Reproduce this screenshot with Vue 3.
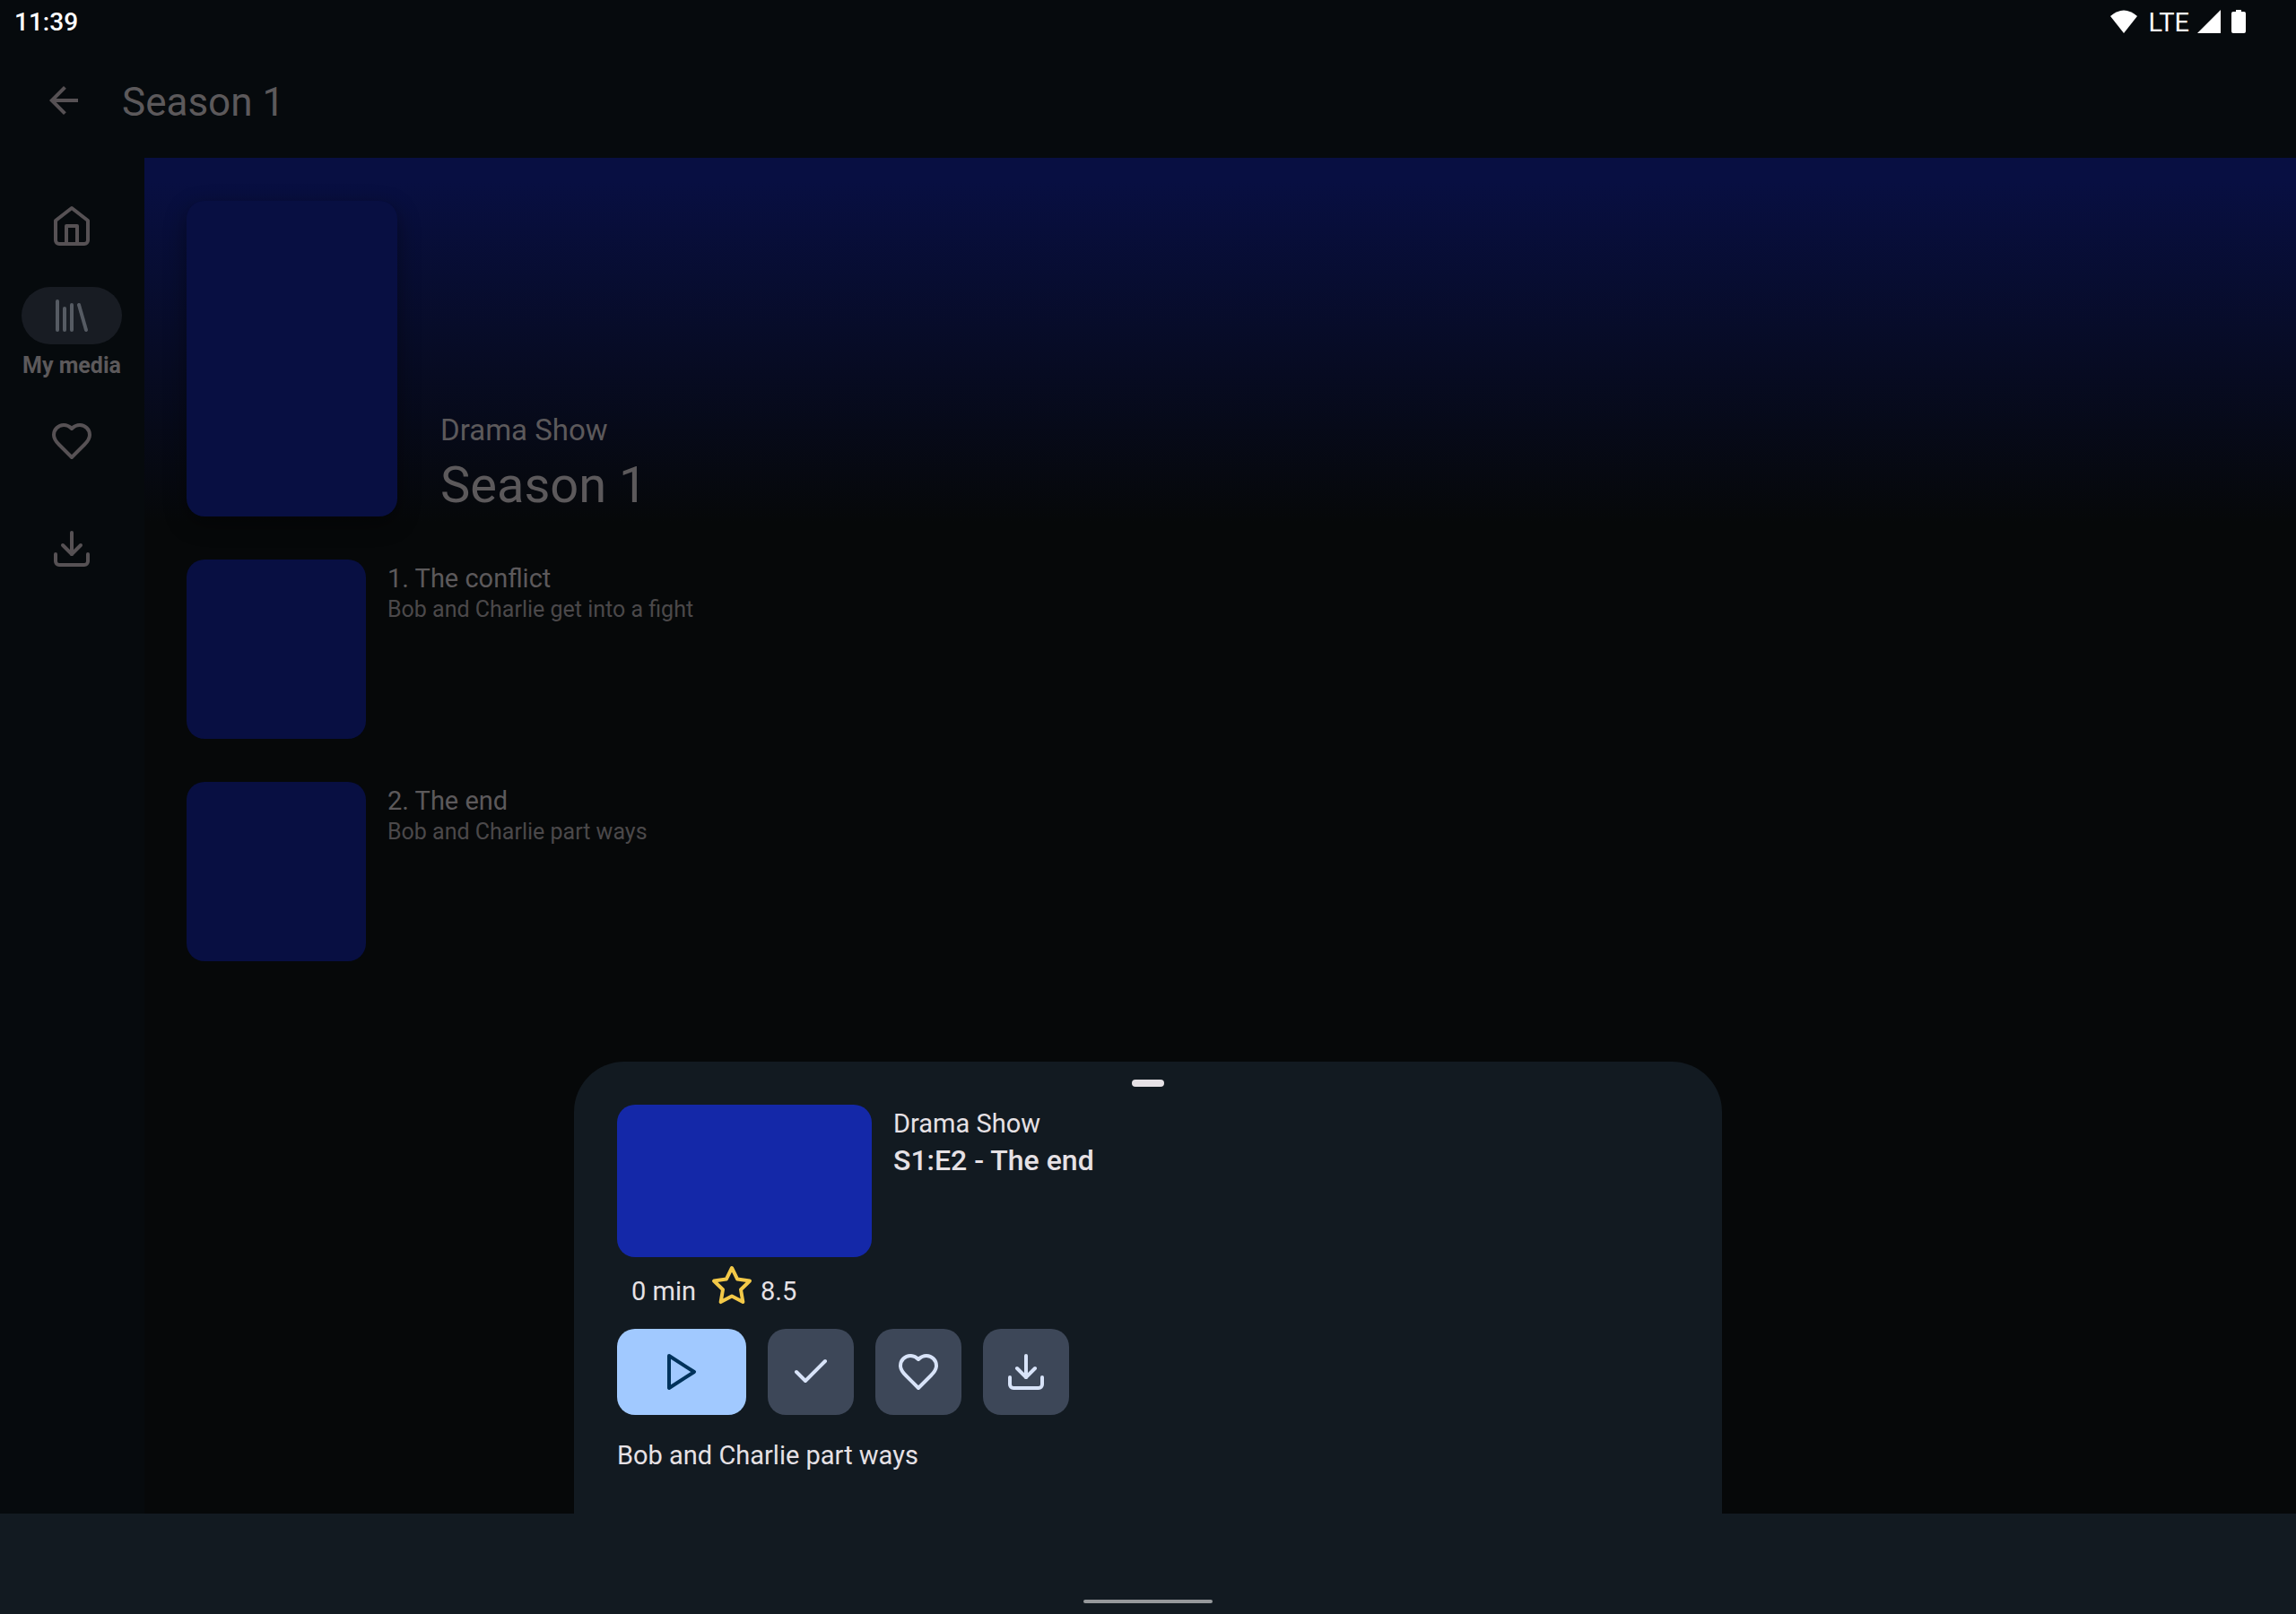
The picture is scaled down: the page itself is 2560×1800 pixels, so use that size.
<script setup>
const navItems = [
  { id: 'home', label: 'Home', active: false },
  { id: 'library', label: 'My media', active: true },
  { id: 'heart', label: 'Favorites', active: false },
  { id: 'download', label: 'Downloads', active: false },
]

const episodes = [
  { number: 1, title: 'The conflict', overview: 'Bob and Charlie get into a fight' },
  { number: 2, title: 'The end', overview: 'Bob and Charlie part ways' },
]

const icons = {
  home: ['m3 9 9-7 9 7v11a2 2 0 0 1-2 2H5a2 2 0 0 1-2-2z', 'M9 22V12h6v10'],
  library: ['m16 6 4 14', 'M12 6v14', 'M8 8v12', 'M4 4v16'],
  heart: [
    'M19 14c1.49-1.46 3-3.21 3-5.5A5.5 5.5 0 0 0 16.5 3c-1.76 0-3 .5-4.5 2-1.5-1.5-2.74-2-4.5-2A5.5 5.5 0 0 0 2 8.5c0 2.3 1.5 4.05 3 5.5l7 7Z',
  ],
  download: ['M21 15v4a2 2 0 0 1-2 2H5a2 2 0 0 1-2-2v-4', 'm7 10 5 5 5-5', 'M12 15V3'],
  check: ['M20 6 9 17l-5-5'],
  play: ['m5 3 14 9-14 9z'],
  star: [
    'm12 2 3.09 6.26L22 9.27l-5 4.87 1.18 6.88L12 17.77l-6.18 3.25L7 14.14 2 9.27l6.91-1.01z',
  ],
}

const actions = [
  { id: 'check', label: 'Mark as played' },
  { id: 'heart', label: 'Add to favorites' },
  { id: 'download', label: 'Download' },
]
</script>

<template>
  <div class="screen">
    <div class="status-bar">
      <span class="clock">11:39</span>
      <div class="status-icons">
        <svg class="wifi" viewBox="0 0 30 26"><path d="M0 7Q15-6 30 7L15 26z" /></svg>
        <span class="network">LTE</span>
        <svg class="signal" viewBox="0 0 26 26"><path d="M26 0v26H0z" /></svg>
        <svg class="battery" viewBox="0 0 16 26">
          <path d="M5 0h6v2h3a2 2 0 0 1 2 2v20a2 2 0 0 1-2 2H2a2 2 0 0 1-2-2V4a2 2 0 0 1 2-2h3z" />
        </svg>
      </div>
    </div>

    <header class="app-bar">
      <button class="back" type="button" aria-label="Back">
        <svg class="back-icon" viewBox="0 0 24 24">
          <path d="M20 11H7.83l5.59-5.59L12 4l-8 8 8 8 1.41-1.41L7.83 13H20z" />
        </svg>
      </button>
      <h1 class="app-title">Season 1</h1>
    </header>

    <div class="body">
      <nav class="rail">
        <a
          v-for="item in navItems"
          :key="item.id"
          class="rail-item"
          :class="{ active: item.active }"
          href="#"
          :aria-label="item.label"
        >
          <span class="pill">
            <svg class="icon" viewBox="0 0 24 24">
              <path v-for="d in icons[item.id]" :key="d" :d="d" />
            </svg>
          </span>
          <span v-if="item.active" class="rail-label">{{ item.label }}</span>
        </a>
      </nav>

      <main class="content">
        <section class="hero">
          <div class="poster"></div>
          <div class="hero-text">
            <p class="show-name">Drama Show</p>
            <h2 class="season-name">Season 1</h2>
          </div>
        </section>
        <ul class="episodes">
          <li v-for="episode in episodes" :key="episode.number" class="episode">
            <div class="thumb"></div>
            <div class="episode-text">
              <h3 class="episode-title">{{ episode.number }}. {{ episode.title }}</h3>
              <p class="episode-overview">{{ episode.overview }}</p>
            </div>
          </li>
        </ul>
      </main>
    </div>

    <footer class="gesture-bar"></footer>

    <section class="sheet" role="dialog" aria-label="S1:E2 - The end">
      <div class="drag-handle"></div>
      <div class="sheet-head">
        <div class="sheet-image"></div>
        <div class="sheet-text">
          <p class="sheet-show">Drama Show</p>
          <h2 class="sheet-title">S1:E2 - The end</h2>
        </div>
      </div>
      <div class="meta">
        <span class="meta-text">0 min</span>
        <svg class="icon star" viewBox="0 0 24 24">
          <path v-for="d in icons.star" :key="d" :d="d" />
        </svg>
        <span class="meta-text">8.5</span>
      </div>
      <div class="actions">
        <button class="action play" type="button" aria-label="Play">
          <svg class="icon" viewBox="0 0 24 24"><path :d="icons.play[0]" /></svg>
        </button>
        <button
          v-for="action in actions"
          :key="action.id"
          class="action"
          type="button"
          :aria-label="action.label"
        >
          <svg class="icon" viewBox="0 0 24 24">
            <path v-for="d in icons[action.id]" :key="d" :d="d" />
          </svg>
        </button>
      </div>
      <p class="overview">Bob and Charlie part ways</p>
      <div class="home-indicator"></div>
    </section>
  </div>
</template>

<style>
body {
  margin: 0;
  background: #060809;
}
</style>

<style scoped>
.screen {
  position: relative;
  display: flex;
  flex-direction: column;
  min-height: 100vh;
  background: #060a0d;
  color: #5c595b;
  font-family: Roboto, 'Noto Sans', sans-serif;
  font-size: 29px;
  line-height: 42px;
}

h1,
h2,
h3,
p,
ul {
  margin: 0;
  padding: 0;
  font-weight: 400;
}

button {
  padding: 0;
  border: 0;
  background: none;
  color: inherit;
}

svg {
  display: block;
}

.icon {
  width: 48px;
  height: 48px;
  fill: none;
  stroke: currentColor;
  stroke-width: 2;
  stroke-linecap: round;
  stroke-linejoin: round;
}

.status-bar {
  display: flex;
  align-items: center;
  justify-content: space-between;
  height: 48px;
  padding: 0 56px 0 16px;
  color: #fff;
}

.clock,
.network {
  padding-top: 2px;
}

.clock {
  font-size: 28px;
  font-weight: 500;
}

.status-icons {
  display: flex;
  align-items: center;
  gap: 12px;
  fill: #fff;
}

.network {
  margin-right: -3px;
}

.wifi {
  width: 30px;
  height: 26px;
}

.signal {
  width: 26px;
  height: 26px;
}

.battery {
  width: 16px;
  height: 26px;
}

.app-bar {
  display: flex;
  align-items: center;
  height: 128px;
  padding: 0 47px;
  gap: 41px;
}

.back-icon {
  width: 48px;
  height: 48px;
  fill: #565154;
}

.app-title {
  padding-top: 4px;
  font-size: 44px;
  line-height: 56px;
}

.body {
  display: flex;
  flex: 1;
}

.rail {
  display: flex;
  flex-direction: column;
  gap: 8px;
  width: 161px;
  padding-top: 20px;
  flex-shrink: 0;
}

.rail-item {
  display: flex;
  flex-direction: column;
  align-items: center;
  justify-content: center;
  width: 160px;
  height: 112px;
  color: #565154;
  text-decoration: none;
}

.pill {
  display: flex;
  align-items: center;
  justify-content: center;
  width: 112px;
  height: 64px;
  border-radius: 32px;
}

.active .pill {
  background: #181c23;
  color: #565b63;
}

.rail-label {
  margin-top: 8px;
  color: #5c595b;
  font-size: 25px;
  font-weight: 700;
  line-height: 32px;
}

.content {
  flex: 1;
  background: #060809;
}

.hero {
  display: flex;
  align-items: flex-end;
  gap: 48px;
  padding: 48px 47px 24px;
  background: linear-gradient(#080f42 6%, #060809 96%);
}

.poster {
  width: 235px;
  height: 352px;
  border-radius: 20px;
  background: #080f42;
  box-shadow: 0 8px 24px rgba(0, 0, 0, 0.4);
}

.show-name {
  font-size: 33px;
  line-height: 52px;
}

.season-name {
  font-size: 56px;
  line-height: 70px;
}

.episodes {
  display: flex;
  flex-direction: column;
  gap: 48px;
  padding: 24px 47px;
  list-style: none;
}

.episode {
  display: flex;
  gap: 24px;
}

.thumb {
  width: 200px;
  height: 200px;
  border-radius: 20px;
  background: #080f42;
}

.episode-title {
  font-size: 29px;
  line-height: 42px;
}

.episode-overview {
  color: #4b484a;
  font-size: 25px;
  line-height: 28px;
}

.gesture-bar {
  height: 112px;
  background: #121a21;
}

.sheet {
  position: absolute;
  right: 25%;
  bottom: 0;
  left: 25%;
  display: flex;
  flex-direction: column;
  padding: 20px 48px 12px;
  border-radius: 56px 56px 0 0;
  background: #121a21;
  color: #e6e1e5;
}

.drag-handle {
  align-self: center;
  width: 36px;
  height: 8px;
  border-radius: 4px;
  background: #e6e1e5;
}

.sheet-head {
  display: flex;
  gap: 24px;
  margin-top: 20px;
}

.sheet-image {
  width: 284px;
  height: 170px;
  border-radius: 20px;
  background: #1428a8;
}

.sheet-title {
  font-size: 32px;
  font-weight: 500;
  line-height: 40px;
}

.meta {
  display: flex;
  align-items: flex-end;
  height: 56px;
  padding: 0 16px;
  gap: 8px;
}

.meta-text {
  line-height: 36px;
}

.star {
  margin-left: 8px;
  color: #f3c948;
}

.actions {
  display: flex;
  gap: 24px;
  margin-top: 24px;
}

.action {
  display: flex;
  align-items: center;
  justify-content: center;
  width: 96px;
  height: 96px;
  border-radius: 20px;
  background: #3d4758;
  color: #d8e3f8;
}

.play {
  width: 144px;
  background: #a1c9ff;
  color: #00325b;
}

.overview {
  margin-top: 24px;
}

.home-indicator {
  align-self: center;
  width: 144px;
  height: 4px;
  margin-top: 140px;
  border-radius: 2px;
  background: #95989b;
}
</style>
